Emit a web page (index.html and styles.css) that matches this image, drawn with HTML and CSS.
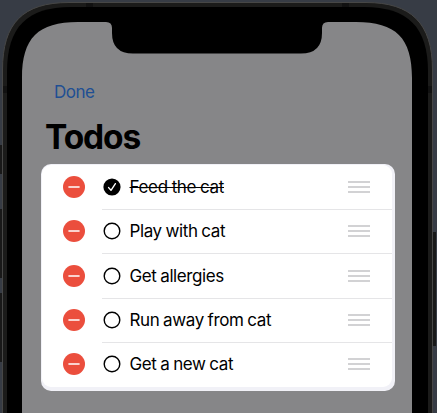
FILE: index.html
```
<!DOCTYPE html>
<html lang="en">
<head>
<meta charset="utf-8">
<title>Todos</title>
<link rel="stylesheet" href="styles.css">
</head>
<body>
<svg class="phone" viewBox="0 0 437 413" aria-hidden="true">
  <path class="button" d="M0 145h3v29H0zM0 209h3v69H0zM0 293h3v69H0zM432 232h4v114h-4z"/>
  <path class="shell" d="M2.5 420V70C2.5 23 23 2.5 69 2.5H366C411 2.5 432.5 23 432.5 70V420z"/>
  <path class="antenna" d="M86 3h7v4h-7zM342 3h7v4h-7zM3 86h4v7H3zM428 86h4v7h-4z"/>
  <path class="bezel" d="M7 420V72C7 27 27 7 71 7H364C408 7 428 27 428 72V420z"/>
  <path class="display" d="M22 420V78C22 38 38 22 78 22H106Q112 22 112 28V33Q112 53.5 133 53.5H301Q322 53.5 322 33V28Q322 22 328 22H356C396 22 412 38 412 78V420z"/>
</svg>
<main class="screen">
  <a class="done">Done</a>
  <h1>Todos</h1>
  <section class="spotlight">
    <ul class="list">
      <li>
        <svg class="remove" viewBox="0 0 22 22"><circle cx="11" cy="11" r="11"/><path d="M6 11h10"/></svg>
        <svg class="check" viewBox="0 0 18 18"><circle cx="9" cy="9" r="8.6" fill="#000"/><path d="M5.6 9.6 8 12.3 12.4 5.7"/></svg>
        <span class="row"><span class="label struck">Feed the cat</span><svg class="grip" viewBox="0 0 22 12"><path d="M0 1h22M0 6h22M0 11h22"/></svg></span>
      </li>
      <li>
        <svg class="remove" viewBox="0 0 22 22"><circle cx="11" cy="11" r="11"/><path d="M6 11h10"/></svg>
        <svg class="check" viewBox="0 0 18 18"><circle class="ring" cx="9" cy="9" r="7.8"/></svg>
        <span class="row"><span class="label">Play with cat</span><svg class="grip" viewBox="0 0 22 12"><path d="M0 1h22M0 6h22M0 11h22"/></svg></span>
      </li>
      <li>
        <svg class="remove" viewBox="0 0 22 22"><circle cx="11" cy="11" r="11"/><path d="M6 11h10"/></svg>
        <svg class="check" viewBox="0 0 18 18"><circle class="ring" cx="9" cy="9" r="7.8"/></svg>
        <span class="row"><span class="label">Get allergies</span><svg class="grip" viewBox="0 0 22 12"><path d="M0 1h22M0 6h22M0 11h22"/></svg></span>
      </li>
      <li>
        <svg class="remove" viewBox="0 0 22 22"><circle cx="11" cy="11" r="11"/><path d="M6 11h10"/></svg>
        <svg class="check" viewBox="0 0 18 18"><circle class="ring" cx="9" cy="9" r="7.8"/></svg>
        <span class="row"><span class="label">Run away from cat</span><svg class="grip" viewBox="0 0 22 12"><path d="M0 1h22M0 6h22M0 11h22"/></svg></span>
      </li>
      <li>
        <svg class="remove" viewBox="0 0 22 22"><circle cx="11" cy="11" r="11"/><path d="M6 11h10"/></svg>
        <svg class="check" viewBox="0 0 18 18"><circle class="ring" cx="9" cy="9" r="7.8"/></svg>
        <span class="row"><span class="label">Get a new cat</span><svg class="grip" viewBox="0 0 22 12"><path d="M0 1h22M0 6h22M0 11h22"/></svg></span>
      </li>
    </ul>
  </section>
</main>
</body>
</html>
```
FILE: styles.css
```
* { box-sizing: border-box; }
body {
  margin: 0;
  width: 437px;
  height: 413px;
  overflow: hidden;
  background: #373c45;
  font-family: Inter, "Liberation Sans", sans-serif;
  color: #000;
}
.phone {
  position: absolute;
  inset: 0;
  width: 437px;
  height: 413px;
  z-index: -1;
}
.button { fill: #191919; }
.shell { fill: #1b1b1a; stroke: #474746; stroke-width: 1; }
.antenna { fill: #111; }
.bezel { fill: #000; }
.display { fill: #868688; }
.screen { padding: 82px 42px 0 41px; }
.done {
  display: block;
  margin-left: 13px;
  font-size: 17px;
  line-height: 21px;
  letter-spacing: -0.5px;
  color: #204f93;
}
h1 {
  margin: 14px 0 0 4px;
  font-size: 33.5px;
  line-height: 40px;
  font-weight: 700;
  letter-spacing: -1.1px;
}
.spotlight {
  width: 353.5px;
  height: 227px;
  margin-top: 7px;
  padding: 1px 2.5px 4px 1px;
  border-radius: 10px;
  background: #f1f1f7;
}
.list {
  margin: 0;
  padding: 0;
  list-style: none;
  height: 222px;
  border-radius: 9px;
  background: #fff;
}
li {
  display: flex;
  align-items: center;
  height: 44.3px;
  padding-left: 21px;
  position: relative;
}
li:not(:last-child)::after {
  content: "";
  position: absolute;
  left: 60px;
  right: 0;
  bottom: -0.8px;
  height: 1px;
  background: #e5e5e7;
}
.remove { width: 22px; height: 22px; fill: #eb4e3d; stroke-linecap: round; }
.remove path { stroke: #fff; stroke-width: 1.6; }
.check { width: 18px; height: 18px; margin-left: 18px; }
.check path { fill: none; stroke: #fff; stroke-width: 1.4; stroke-linecap: round; stroke-linejoin: round; }
.ring { fill: none; stroke: #000; stroke-width: 1.4; }
.row {
  display: flex;
  flex: 1;
  align-items: center;
  justify-content: space-between;
  padding: 0 22px 0 8.5px;
}
.label {
  font-size: 17px;
  line-height: 22px;
  letter-spacing: -0.4px;
  word-spacing: -0.6px;
  white-space: nowrap;
}
.struck { letter-spacing: -0.33px; text-decoration: line-through; text-decoration-thickness: 1px; }
.grip { width: 22px; height: 12px; stroke: #c4c4c6; stroke-width: 1.5; }
```
